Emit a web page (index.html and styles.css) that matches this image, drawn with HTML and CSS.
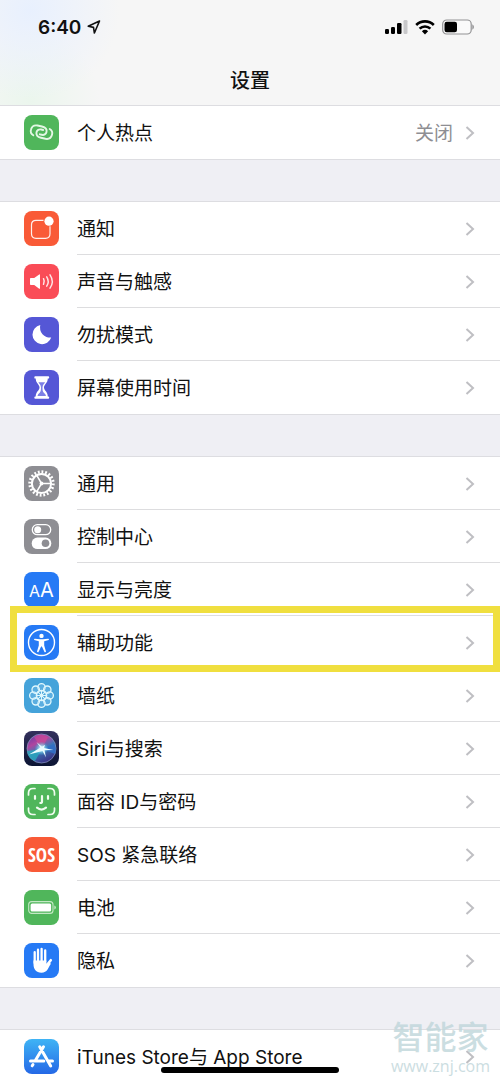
FILE: index.html
```
<!DOCTYPE html>
<html lang="zh-CN">
<head>
<meta charset="utf-8">
<meta name="viewport" content="width=device-width, initial-scale=1">
<title>设置</title>
<link rel="stylesheet" href="styles.css">
</head>
<body>
<svg class="defs" aria-hidden="true">
  <defs>
    <symbol id="chevron" viewBox="0 0 10 16"><path d="M1.500 1 8 7l-6.500 6" fill="none" stroke="#bfbfc3" stroke-width="2"/></symbol>
    <linearGradient id="store" x1="0" y1="0" x2="0" y2="1"><stop offset="0" stop-color="#3fb4f5"/><stop offset="1" stop-color="#2468e6"/></linearGradient>
    <linearGradient id="siri-bg" x1="0" y1="0" x2="0" y2="1"><stop offset="0" stop-color="#33305c"/><stop offset="1" stop-color="#0b1433"/></linearGradient>
    <linearGradient id="siri-orb" x1="0.200" y1="0" x2="0.700" y2="1"><stop offset="0" stop-color="#6a3aa8"/><stop offset="0.300" stop-color="#b0459f"/><stop offset="0.550" stop-color="#3b78b8"/><stop offset="1" stop-color="#3a2a80"/></linearGradient>
    <radialGradient id="siri-glow"><stop offset="0" stop-color="#fff"/><stop offset="0.350" stop-color="#a9ecf7" stop-opacity="0.800"/><stop offset="1" stop-color="#3ec3e0" stop-opacity="0"/></radialGradient>
  </defs>
</svg>
<div class="phone">
  <header class="header">
    <div class="status">
      <div class="status-left">
        <span class="clock">6:40</span>
        <svg width="14" height="14" viewBox="0 0 14 14"><path d="M12.500 1 1.200 6.200l5.300 1.200.900 5.600z" fill="none" stroke="#111" stroke-width="1.600" stroke-linejoin="round"/></svg>
      </div>
      <div class="status-right">
        <svg width="23" height="16" viewBox="0 0 23 16"><rect x="0" y="10" width="4" height="5" rx="1.200"/><rect x="6" y="8" width="4" height="7" rx="1.200"/><rect x="12" y="4" width="4.500" height="11" rx="1.200"/><rect x="18.500" y="1" width="4" height="14" rx="1.200" fill="#c8c8ca"/></svg>
        <svg width="20" height="16" viewBox="0 0 20 16"><g fill="none" stroke="#000" stroke-width="2.600"><path d="M1.200 6a12.600 12.600 0 0 1 17.600 0"/><path d="M4.600 9.600a7.800 7.800 0 0 1 10.800 0"/></g><path d="M10 15.500 6.900 12.300a4.500 4.500 0 0 1 6.200 0z"/></svg>
        <svg width="32" height="16" viewBox="0 0 32 16"><rect x="0.700" y="1" width="28.500" height="14" rx="4" fill="#fafafa" stroke="#929294" stroke-width="1.200"/><rect x="2.500" y="2.800" width="12.500" height="10.400" rx="2.200"/><path d="M30.300 5.300q1.700.900 1.700 2.700t-1.700 2.700z" fill="#929294"/></svg>
      </div>
    </div>
    <h1 class="title">设置</h1>
  </header>

  <main class="groups">
    <nav class="group" aria-label="网络">
      <a class="row" href="#hotspot">
        <svg class="icon green" viewBox="0 0 35 35"><g fill="none" stroke="#e4f7e5" stroke-width="1.900" stroke-linecap="round"><path d="M9.300 20.300A5 5 0 0 1 7 14.500C7.800 11.500 10.500 10 13.500 10.500l4.500 1C21.500 12.300 23 14.600 22.500 17c-.500 2.300-2.500 3.300-4.700 2.800l-2-.5"/><path d="M25.700 14A5 5 0 0 1 28 19.800C27.200 22.800 24.500 24.300 21.500 23.800l-4.500-1C13.500 22 12 19.700 12.500 17.300c.5-2.300 2.500-3.300 4.700-2.800l2 .5"/></g></svg>
        <span class="cell"><span class="label">个人热点</span><span class="value">关闭</span><svg class="chevron"><use href="#chevron"/></svg></span>
      </a>
    </nav>

    <nav class="group" aria-label="提醒">
      <a class="row" href="#notifications">
        <svg class="icon orange" viewBox="0 0 35 35"><path d="M19.500 9.300H12q-4.500 0-4.500 4.500v9q0 4.500 4.500 4.500h9.500q4.500 0 4.500-4.500v-7.500" fill="none" stroke="#fff0ec" stroke-width="1.200"/><circle cx="25" cy="10.200" r="4.600" fill="#fff"/></svg>
        <span class="cell"><span class="label">通知</span><svg class="chevron"><use href="#chevron"/></svg></span>
      </a>
      <a class="row" href="#sounds">
        <svg class="icon red" viewBox="0 0 35 35"><path d="M6.800 14h3.400l5-3.600q.800-.400.800.500v13.300q0 .900-.800.500l-5-3.700H6.800q-.800 0-.800-.800v-5.400q0-.800.800-.800z" fill="#fff"/><g fill="none" stroke="#ffe3e4" stroke-width="1.500" stroke-linecap="round"><path d="M19.500 14.700q1.600 2.800 0 5.600"/><path d="M22.700 12.800q3 4.700 0 9.400"/><path d="M26 10.800q4.600 6.700 0 13.400"/></g></svg>
        <span class="cell"><span class="label">声音与触感</span><svg class="chevron"><use href="#chevron"/></svg></span>
      </a>
      <a class="row" href="#dnd">
        <svg class="icon indigo" viewBox="0 0 35 35"><path d="M16.300 8.100A9.600 9.600 0 1 0 27.200 20.500 10 10 0 0 1 16.300 8.100z" fill="#fff"/></svg>
        <span class="cell"><span class="label">勿扰模式</span><svg class="chevron"><use href="#chevron"/></svg></span>
      </a>
      <a class="row" href="#screen-time">
        <svg class="icon indigo" viewBox="0 0 35 35"><path d="M11.300 6.200h12.900q1 0 1 1.200t-1 1.200h-.400c0 4.500-3.800 6-3.800 8.900s3.800 4.400 3.800 8.900h.400q1 0 1 1.200t-1 1.200H11.300q-1 0-1-1.200t1-1.200h.400c0-4.500 3.800-6 3.800-8.900s-3.800-4.400-3.800-8.900h-.400q-1 0-1-1.200t1-1.200z" fill="#fff"/><path d="M14.400 12.200h6.700c-1 1.900-2.500 2.500-2.600 5.300 0 2.500.200 4.300 1.300 5.200q2 1.300 2.200 3.200h-8.500q.200-1.900 2.200-3.200c1.100-.9 1.300-2.700 1.300-5.200-.1-2.800-1.600-3.400-2.600-5.300z" fill="#7d80e6"/></svg>
        <span class="cell"><span class="label">屏幕使用时间</span><svg class="chevron"><use href="#chevron"/></svg></span>
      </a>
    </nav>

    <nav class="group" aria-label="系统">
      <a class="row" href="#general">
        <svg class="icon gray" viewBox="0 0 35 35"><g fill="none" stroke="#fff"><circle cx="17.500" cy="17.500" r="11.700" stroke-width="3" pathLength="40" stroke-dasharray="1 1"/><circle cx="17.500" cy="17.500" r="9.600" stroke-width="2"/><path d="M17.500 17.500h9.200M17.500 17.500l-4.700-8.100M17.500 17.500l-4.700 8.100" stroke-width="1.500"/></g><circle cx="17.500" cy="17.500" r="1.900" fill="#fff"/></svg>
        <span class="cell"><span class="label">通用</span><svg class="chevron"><use href="#chevron"/></svg></span>
      </a>
      <a class="row" href="#control">
        <svg class="icon gray" viewBox="0 0 35 35"><rect x="8.300" y="5.700" width="18.400" height="10" rx="5" fill="none" stroke="#fff" stroke-width="1.300"/><circle cx="13.700" cy="10.700" r="3.500" fill="#fff"/><rect x="7.700" y="18.600" width="19.600" height="11.500" rx="5.700" fill="#fff"/><circle cx="21.500" cy="24.300" r="3.800" fill="#8e8e93"/></svg>
        <span class="cell"><span class="label">控制中心</span><svg class="chevron"><use href="#chevron"/></svg></span>
      </a>
      <a class="row" href="#display">
        <svg class="icon blue" viewBox="0 0 35 35"><g fill="#fff" font-family="Inter, sans-serif"><text x="5" y="25" font-size="16">A</text><text x="16" y="25" font-size="20">A</text></g></svg>
        <span class="cell"><span class="label">显示与亮度</span><svg class="chevron"><use href="#chevron"/></svg></span>
      </a>
      <a class="row marked" href="#accessibility">
        <svg class="icon blue" viewBox="0 0 35 35"><circle cx="17.500" cy="17.500" r="13" fill="none" stroke="#fff" stroke-width="1.400"/><circle cx="17.500" cy="10.900" r="2.200" fill="#fff"/><path d="M10.800 13.700 16 14.300h3l5.200-.6q1.100.100.600 1.300l-4.600 1.300v4.200l1.800 6q0 1-1.400.700L17.900 21.500h-.8l-2.700 5.700q-1.400.3-1.400-.7l1.800-6v-4.200L10.200 15q-.500-1.200.600-1.300z" fill="#fff"/></svg>
        <span class="cell"><span class="label">辅助功能</span><svg class="chevron"><use href="#chevron"/></svg></span>
      </a>
      <a class="row" href="#wallpaper">
        <svg class="icon sky" viewBox="0 0 35 35"><g fill="#8ecbed" fill-opacity="0.300" stroke="#dff7fd" stroke-width="1.300"><circle cx="17.500" cy="9.300" r="3.700"/><circle cx="23.300" cy="11.700" r="3.700"/><circle cx="25.700" cy="17.500" r="3.700"/><circle cx="23.300" cy="23.300" r="3.700"/><circle cx="17.500" cy="25.700" r="3.700"/><circle cx="11.700" cy="23.300" r="3.700"/><circle cx="9.300" cy="17.500" r="3.700"/><circle cx="11.700" cy="11.700" r="3.700"/></g><g fill="none" stroke="#dff7fd" stroke-width="1.100"><circle cx="17.500" cy="17.500" r="5.300"/><path d="M17.500 12.200v10.600M12.200 17.500h10.600M13.800 13.800l7.400 7.400M21.200 13.800l-7.400 7.400"/></g><circle cx="17.500" cy="17.500" r="1.700" fill="#dff7fd"/></svg>
        <span class="cell"><span class="label">墙纸</span><svg class="chevron"><use href="#chevron"/></svg></span>
      </a>
      <a class="row" href="#siri">
        <svg class="icon" viewBox="0 0 35 35"><rect width="35" height="35" fill="url(#siri-bg)"/><circle cx="17.500" cy="17.500" r="14.500" fill="url(#siri-orb)" stroke="#8a9cc4" stroke-width="0.700"/><path d="M18 18 10 6Q17 1 24 6z" fill="#ce4896" opacity="0.700"/><path d="m18 18 12-5q3 5 1 10z" fill="#3270c4" opacity="0.900"/><path d="M18 18 3 20q1 8 8 10z" fill="#29a9bd" opacity="0.800"/><circle cx="17.500" cy="17.500" r="7" fill="url(#siri-glow)"/><path d="M16.500 16.500 12.500 11l5.500 4.800 3-2-1 3.200 9.500 2-9 .3 1.500 7.200-3.500-6.500L5 23.500z" fill="#e9fbff"/></svg>
        <span class="cell"><span class="label">Siri与搜索</span><svg class="chevron"><use href="#chevron"/></svg></span>
      </a>
      <a class="row" href="#face-id">
        <svg class="icon green" viewBox="0 0 35 35"><g fill="none" stroke="#effcef" stroke-width="1.700" stroke-linecap="round"><path d="M4.500 11V9q0-4.500 4.500-4.500h2M24 4.500h2q4.500 0 4.500 4.500v2M30.500 24v2q0 4.500-4.500 4.500h-2M11 30.500H9q-4.500 0-4.500-4.500v-2"/><path d="M11 12.200v2.600M24 12.200v2.600M18 12.200v5.600q0 1.200-1.700 1.200M13 23.700q4.500 3.700 9 0" stroke-width="2.200"/></g></svg>
        <span class="cell"><span class="label">面容 ID与密码</span><svg class="chevron"><use href="#chevron"/></svg></span>
      </a>
      <a class="row" href="#sos">
        <svg class="icon orange" viewBox="0 0 35 35"><text class="sos" x="17.500" y="24.500" text-anchor="middle">SOS</text></svg>
        <span class="cell"><span class="label">SOS 紧急联络</span><svg class="chevron"><use href="#chevron"/></svg></span>
      </a>
      <a class="row" href="#battery">
        <svg class="icon green" viewBox="0 0 35 35"><rect x="4.700" y="11.600" width="24.300" height="11.800" rx="3" fill="none" stroke="#c4e8c5" stroke-width="1.100"/><rect x="6.600" y="13.500" width="20.500" height="8" rx="1.500" fill="#fff"/><path d="M30.300 15.400q1.600.600 1.600 2.100t-1.600 2.100z" fill="#c4e8c5"/></svg>
        <span class="cell"><span class="label">电池</span><svg class="chevron"><use href="#chevron"/></svg></span>
      </a>
      <a class="row" href="#privacy">
        <svg class="icon blue" viewBox="0 0 35 35"><g stroke="#fff" stroke-linecap="round" fill="none"><path d="M10.700 9.200V20M14 6.700V19M17.600 5.800V19M21.200 7.400V19" stroke-width="2.300"/><path d="m22.500 22.500 4.300-5.300" stroke-width="2.600"/></g><path d="M9.500 17.500h12.800v3.300l3-1.600 1.600 1.600c-2.800 4-3.300 8.900-9.500 8.900-5.400 0-7.900-3.400-7.900-8.700z" fill="#fff"/></svg>
        <span class="cell"><span class="label">隐私</span><svg class="chevron"><use href="#chevron"/></svg></span>
      </a>
    </nav>

    <nav class="group" aria-label="商店">
      <a class="row" href="#store">
        <svg class="icon" viewBox="0 0 35 35"><rect width="35" height="35" fill="url(#store)"/><g stroke="#fff" stroke-width="3" stroke-linecap="round" fill="none"><path d="m19.500 7.800-8.300 14M15.700 7.800 26.700 27M6.500 22h13.300M25 22h3.500M9 25.500l-.800 1.300"/></g></svg>
        <span class="cell"><span class="label">iTunes Store与 App Store</span><svg class="chevron"><use href="#chevron"/></svg></span>
      </a>
    </nav>
  </main>

  <div class="watermark"><span class="brand">智能家</span><span class="site">www.znj.com</span></div>
  <div class="home-bar"></div>
</div>
</body>
</html>
```
FILE: styles.css
```
* {
  box-sizing: border-box;
}

body {
  margin: 0;
  background: #efeff4;
  color: #111;
  font-family: Inter, "Noto Sans CJK SC", sans-serif;
}

.defs {
  position: absolute;
  width: 0;
  height: 0;
}

.phone {
  position: relative;
}

.header {
  padding: 15px 26px 10px 38px;
  background:
    radial-gradient(circle at 30px 10px, #e8f0fe, transparent 90px),
    radial-gradient(circle at 30px 100px, #ebf6ed, transparent 70px),
    #f6f6f6;
}

.status {
  display: flex;
  justify-content: space-between;
  align-items: center;
  height: 24px;
}

.status-left,
.status-right {
  display: flex;
  align-items: center;
  gap: 6px;
}

.status-right {
  gap: 7px;
}

.clock {
  font-size: 19px;
  font-weight: 600;
}

.title {
  margin: 27px 0 0;
  padding-right: 12px;
  font-size: 20px;
  line-height: 30px;
  font-weight: 500;
  text-align: center;
}

.groups {
  display: flex;
  flex-direction: column;
  gap: 43px;
}

.group {
  background: #fff;
  box-shadow: 0 0 0 1px #dddde1;
}

.row {
  position: relative;
  display: flex;
  align-items: center;
  gap: 18px;
  height: 53px;
  padding-left: 24px;
  color: inherit;
  text-decoration: none;
}

.icon {
  flex: none;
  width: 35px;
  height: 35px;
  border-radius: 8px;
}

.green { background: #50b65b; }
.orange { background: #f95a37; }
.red { background: #fa4c57; }
.indigo { background: #5557d6; }
.gray { background: #8e8e93; }
.blue { background: #267af5; }
.sky { background: #45a3da; }

.sos {
  fill: #fff;
  font-family: "Open Sans Condensed", Roboto, sans-serif;
  font-size: 19px;
  font-weight: 700;
}

.cell {
  flex: 1;
  display: flex;
  align-items: center;
  gap: 12px;
  height: 100%;
  padding: 3px 25px 0 0;
  border-bottom: 1px solid #dddddf;
}

.row:last-child .cell {
  border-bottom-color: transparent;
}

.label {
  margin-right: auto;
  font-size: 19px;
  line-height: 28px;
}

.value {
  color: #8e8e93;
  font-size: 19px;
  line-height: 28px;
}

.chevron {
  width: 10px;
  height: 16px;
}

.marked::after {
  content: "";
  position: absolute;
  z-index: 1;
  top: -10px;
  right: 0;
  bottom: -3px;
  left: 10px;
  border: 7px solid #f0df3f;
}

.home-bar {
  position: absolute;
  bottom: 10px;
  left: 50%;
  width: 178px;
  height: 6px;
  margin-left: -89px;
  border-radius: 3px;
  background: #000;
}

.watermark {
  position: absolute;
  right: 10px;
  bottom: 7px;
  display: flex;
  flex-direction: column;
  align-items: center;
  color: #bfd6da;
  opacity: 0.8;
}

.brand {
  font-size: 32px;
  line-height: 36px;
  font-weight: 500;
}

.site {
  font-family: "Open Sans", sans-serif;
  font-size: 16px;
  line-height: 20px;
}
```
